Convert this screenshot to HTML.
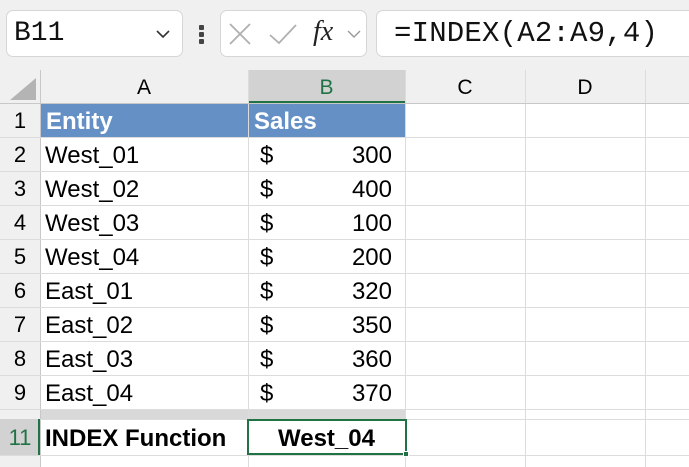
<!DOCTYPE html>
<html><head><meta charset="utf-8"><style>
*{margin:0;padding:0;box-sizing:border-box}
body{width:689px;height:467px;overflow:hidden;background:#f0f0f0;font-family:"Liberation Sans",sans-serif;position:relative}
.box{position:absolute;background:#fff;border:1px solid #d6d6d6;border-radius:7px}
.a{position:absolute}
.cell{position:absolute;font-size:24px;color:#000;line-height:34px;white-space:nowrap}
.vl{position:absolute;width:1px;background:#dcdcdc}
.hl{position:absolute;height:1px;background:#dcdcdc}
.rh{position:absolute;left:0;width:40px;text-align:center;font-size:22px;line-height:34px;color:#000}
.ch{position:absolute;top:70px;height:33px;text-align:center;font-size:21px;line-height:35px}
</style></head><body>
<div class="box" style="left:6px;top:10px;width:177px;height:47px"></div>
<div class="a" style="left:14px;top:18px;font-size:28px;font-family:'Liberation Mono',monospace;color:#111">B11</div>
<svg class="a" style="left:155px;top:28px" width="16" height="12"><path d="M2 3 L8 9 L14 3" stroke="#333" stroke-width="1.6" fill="none"/></svg>
<div class="a" style="left:199px;top:25px;width:5px;height:5px;background:#444;border-radius:1px"></div>
<div class="a" style="left:199px;top:32px;width:5px;height:5px;background:#444;border-radius:1px"></div>
<div class="a" style="left:199px;top:39px;width:5px;height:5px;background:#444;border-radius:1px"></div>
<div class="box" style="left:220px;top:10px;width:147px;height:47px"></div>
<svg class="a" style="left:228px;top:22px" width="30" height="24"><path d="M2 2 L22 22 M22 2 L2 22" stroke="#b0b0b0" stroke-width="1.8" fill="none"/></svg>
<svg class="a" style="left:268px;top:22px" width="34" height="24"><path d="M2 13 L11 21 L28 3" stroke="#b0b0b0" stroke-width="1.8" fill="none"/></svg>
<div class="a" style="left:313px;top:16px;font-size:28px;font-family:'Liberation Serif',serif;font-style:italic;color:#222">fx</div>
<svg class="a" style="left:346px;top:28px" width="16" height="12"><path d="M2 3 L8 9 L14 3" stroke="#999" stroke-width="1.4" fill="none"/></svg>
<div class="box" style="left:376px;top:10px;width:330px;height:47px"></div>
<div class="a" style="left:394px;top:17px;font-size:29px;font-family:'Liberation Mono',monospace;color:#111;letter-spacing:0.2px">=INDEX(A2:A9,4)</div>

<div class="a" style="left:0;top:70px;width:689px;height:397px;background:#fff"></div>
<div class="a" style="left:0;top:70px;width:689px;height:33px;background:#f0f0f0"></div>
<div class="a" style="left:0;top:103px;width:40px;height:364px;background:#f0f0f0"></div>
<svg class="a" style="left:8px;top:76px" width="30" height="26"><path d="M28 2 L28 24 L2 24 Z" fill="#b4b4b4"/></svg>
<div class="a" style="left:248px;top:70px;width:157px;height:33px;background:#d2d2d2;border-bottom:2px solid #217346"></div>
<div class="ch" style="left:40px;width:208px">A</div>
<div class="ch" style="left:248px;width:157px;color:#217346">B</div>
<div class="ch" style="left:405px;width:120px">C</div>
<div class="ch" style="left:525px;width:120px">D</div>

<div class="a" style="left:40px;top:103px;width:365px;height:34px;background:#6490c6"></div>
<div class="a" style="left:40px;top:409px;width:365px;height:10px;background:#d9d9d9"></div>

<div class="vl" style="left:40px;top:70px;height:397px;background:#c8c8c8"></div>
<div class="vl" style="left:248px;top:70px;height:397px"></div>
<div class="vl" style="left:405px;top:70px;height:397px"></div>
<div class="vl" style="left:525px;top:70px;height:397px"></div>
<div class="vl" style="left:645px;top:70px;height:397px"></div>
<div class="hl" style="left:0;top:103px;width:689px;background:#c8c8c8"></div>
<div class="hl" style="left:0;top:137px;width:689px"></div>
<div class="hl" style="left:0;top:171px;width:689px"></div>
<div class="hl" style="left:0;top:205px;width:689px"></div>
<div class="hl" style="left:0;top:239px;width:689px"></div>
<div class="hl" style="left:0;top:273px;width:689px"></div>
<div class="hl" style="left:0;top:307px;width:689px"></div>
<div class="hl" style="left:0;top:341px;width:689px"></div>
<div class="hl" style="left:0;top:375px;width:689px"></div>
<div class="hl" style="left:0;top:409px;width:689px"></div>
<div class="hl" style="left:0;top:419px;width:689px"></div>
<div class="hl" style="left:0;top:455px;width:689px"></div>

<div class="rh" style="top:104px">1</div>
<div class="rh" style="top:138px">2</div>
<div class="rh" style="top:172px">3</div>
<div class="rh" style="top:206px">4</div>
<div class="rh" style="top:240px">5</div>
<div class="rh" style="top:274px">6</div>
<div class="rh" style="top:308px">7</div>
<div class="rh" style="top:342px">8</div>
<div class="rh" style="top:376px">9</div>
<div class="a" style="left:0;top:419px;width:40px;height:36px;background:#d2d2d2;border-right:2px solid #217346"></div>
<div class="rh" style="top:421px;color:#217346">11</div>

<div class="cell" style="left:46px;top:105px;color:#fff;font-weight:bold">Entity</div>
<div class="cell" style="left:254px;top:105px;color:#fff;font-weight:bold">Sales</div>

<div class="cell" style="left:45px;top:139px">West_01</div>
<div class="cell" style="left:45px;top:173px">West_02</div>
<div class="cell" style="left:45px;top:207px">West_03</div>
<div class="cell" style="left:45px;top:241px">West_04</div>
<div class="cell" style="left:45px;top:275px">East_01</div>
<div class="cell" style="left:45px;top:309px">East_02</div>
<div class="cell" style="left:45px;top:343px">East_03</div>
<div class="cell" style="left:45px;top:377px">East_04</div>

<div class="cell" style="left:260px;top:139px">$</div><div class="cell" style="left:300px;width:92px;text-align:right;top:139px">300</div>
<div class="cell" style="left:260px;top:173px">$</div><div class="cell" style="left:300px;width:92px;text-align:right;top:173px">400</div>
<div class="cell" style="left:260px;top:207px">$</div><div class="cell" style="left:300px;width:92px;text-align:right;top:207px">100</div>
<div class="cell" style="left:260px;top:241px">$</div><div class="cell" style="left:300px;width:92px;text-align:right;top:241px">200</div>
<div class="cell" style="left:260px;top:275px">$</div><div class="cell" style="left:300px;width:92px;text-align:right;top:275px">320</div>
<div class="cell" style="left:260px;top:309px">$</div><div class="cell" style="left:300px;width:92px;text-align:right;top:309px">350</div>
<div class="cell" style="left:260px;top:343px">$</div><div class="cell" style="left:300px;width:92px;text-align:right;top:343px">360</div>
<div class="cell" style="left:260px;top:377px">$</div><div class="cell" style="left:300px;width:92px;text-align:right;top:377px">370</div>

<div class="cell" style="left:45px;top:422px;font-weight:bold">INDEX Function</div>
<div class="a" style="left:247px;top:419px;width:160px;height:36px;border:2px solid #217346"></div>
<div class="a" style="left:403px;top:451px;width:6px;height:6px;background:#217346;border:1px solid #fff"></div>
<div class="cell" style="left:248px;width:157px;text-align:center;top:422px;font-weight:bold">West_04</div>
</body></html>
